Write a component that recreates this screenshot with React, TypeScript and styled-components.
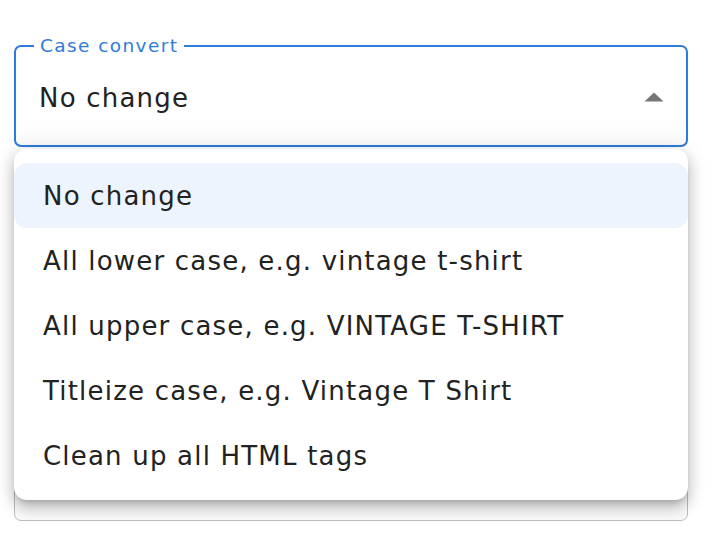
import React from "react";
import styled, { createGlobalStyle } from "styled-components";

const Global = createGlobalStyle`
  html, body { margin: 0; padding: 0; background: #fff; }
  body { font-family: "DejaVu Sans", "Liberation Sans", sans-serif; color: #222; }
`;

const Page = styled.div`
  position: relative;
  width: 712px;
  height: 536px;
  box-sizing: border-box;
  padding: 46px 24px 0 14px;
  display: flex;
  flex-direction: column;
`;

const Field = styled.div<{ $height: number }>`
  position: relative;
  box-sizing: border-box;
  width: 674px;
  height: ${(p) => p.$height}px;
  padding: 0 24px 0 25px;
  display: flex;
  align-items: center;
  justify-content: space-between;
  background: linear-gradient(#fff 70%, #fafafa);
  border-radius: 7px;
`;

const Outline = styled.fieldset<{ $focused?: boolean }>`
  position: absolute;
  inset: -10px 0 0 0;
  margin: 0;
  padding: 0 0 0 18px;
  border: ${(p) => (p.$focused ? "2px solid #2f7bdb" : "1px solid #bdbdbd")};
  border-radius: 7px;
  pointer-events: none;
`;

const Legend = styled.legend`
  padding: 0 6px;
  font-size: 18.5px;
  line-height: 20px;
  letter-spacing: 1.4px;
  color: #2f7bdb;
`;

const Value = styled.span`
  font-size: 26px;
  letter-spacing: 1.2px;
  color: #222;
  margin-top: 2px;
`;

const Spacer = styled.div`
  height: 273px;
`;

const Menu = styled.ul`
  position: absolute;
  left: 14px;
  top: 149px;
  width: 674px;
  height: 351px;
  box-sizing: border-box;
  margin: 0;
  padding: 14px 0 12px;
  list-style: none;
  background: #fff;
  border-radius: 13px;
  box-shadow: 0 5px 6px -3px rgba(0, 0, 0, 0.2), 0 9px 14px 1px rgba(0, 0, 0, 0.14),
    0 3px 18px 3px rgba(0, 0, 0, 0.12);
`;

const Item = styled.li<{ $selected?: boolean }>`
  height: 65px;
  display: flex;
  align-items: center;
  padding-left: 29px;
  font-size: 26px;
  letter-spacing: 1.2px;
  color: #222;
  border-radius: 13px;
  background: ${(p) => (p.$selected ? "#edf4fd" : "transparent")};
`;

const Arrow = () => (
  <svg width="20" height="10" viewBox="0 0 20 10">
    <path d="M0.5 9.5 L10 0.5 L19.5 9.5 Z" fill="#757575" />
  </svg>
);

const options = [
  "No change",
  "All lower case, e.g. vintage t-shirt",
  "All upper case, e.g. VINTAGE T-SHIRT",
  "Titleize case, e.g. Vintage T Shirt",
  "Clean up all HTML tags",
];

export default function App() {
  return (
    <Page>
      <Global />
      <Field $height={101}>
        <Value>No change</Value>
        <Arrow />
        <Outline $focused>
          <Legend>Case convert</Legend>
        </Outline>
      </Field>
      <Spacer />
      <Field $height={101}>
        <Outline />
      </Field>
      <Menu>
        {options.map((o, i) => (
          <Item key={o} $selected={i === 0}>
            {o}
          </Item>
        ))}
      </Menu>
    </Page>
  );
}
